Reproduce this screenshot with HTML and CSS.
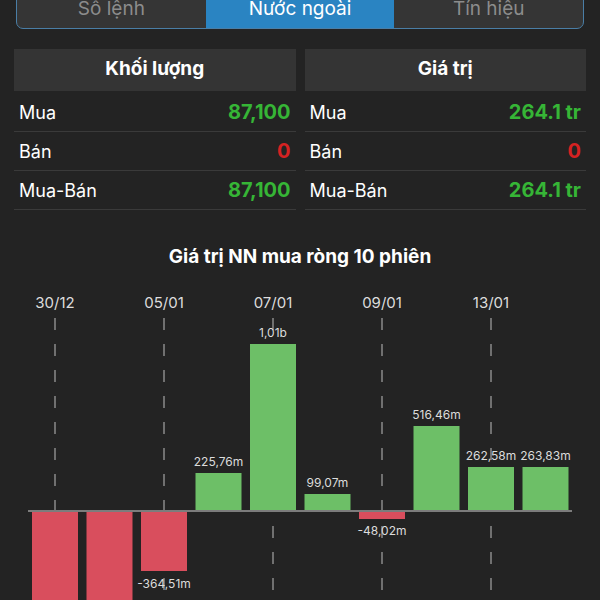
FILE: index.html
```html
<!DOCTYPE html>
<html lang="vi">
<head>
  <meta charset="UTF-8">
  <meta name="viewport" content="width=device-width, initial-scale=1.0">
  <title>Nước ngoài</title>
  <link rel="stylesheet" href="styles.css">
</head>
<body>

  <div class="page">
    <!-- tabs -->
    <div class="segment">
      <div class="seg-item">Sổ lệnh</div>
      <div class="seg-item active">Nước ngoài</div>
      <div class="seg-item">Tín hiệu</div>
    </div>

    <div class="summary">
      <div class="col">
        <div class="col-head">Khối lượng</div>
        <div class="row"><span>Mua</span><span class="up">87,100</span></div>
        <div class="row"><span>Bán</span><span class="down">0</span></div>
        <div class="row"><span>Mua-Bán</span><span class="up">87,100</span></div>
      </div>
      <div class="col">
        <div class="col-head">Giá trị</div>
        <div class="row"><span>Mua</span><span class="up">264.1 tr</span></div>
        <div class="row"><span>Bán</span><span class="down">0</span></div>
        <div class="row"><span>Mua-Bán</span><span class="up">264.1 tr</span></div>
      </div>
    </div>
  </div>

  <h2 class="chart-title">Giá trị NN mua ròng 10 phiên</h2>

  <svg class="chart" width="600" height="332" viewBox="0 268 600 332">
    <!-- dates -->
    <g class="dates">
      <text x="55" y="308">30/12</text>
      <text x="164" y="308">05/01</text>
      <text x="273" y="308">07/01</text>
      <text x="382" y="308">09/01</text>
      <text x="491" y="308">13/01</text>
    </g>
    <g class="grid">
      <line x1="55" y1="318" x2="55" y2="600" />
      <line x1="164" y1="318" x2="164" y2="600" />
      <line x1="273" y1="318" x2="273" y2="600" />
      <line x1="382" y1="318" x2="382" y2="600" />
      <line x1="491" y1="318" x2="491" y2="600" />
    </g>
    <line class="axis" x1="28" y1="511" x2="572" y2="511" />

    <!-- bars -->
    <rect class="neg" x="32" y="512" width="46" height="100" />
    <rect class="neg" x="86.5" y="512" width="46" height="100" />
    <rect class="neg" x="141" y="512" width="46" height="59" />
    <rect class="pos" x="195.5" y="473" width="46" height="37" />
    <rect class="pos" x="250" y="344" width="46" height="166" />
    <rect class="pos" x="304.5" y="494" width="46" height="16" />
    <rect class="neg" x="359" y="512" width="46" height="7" />
    <rect class="pos" x="413.5" y="426" width="46" height="84" />
    <rect class="pos" x="468" y="467" width="46" height="43" />
    <rect class="pos" x="522.5" y="467" width="46" height="43" />

    <g class="labels">
      <text x="164" y="588">-364,51m</text>
      <text x="218.5" y="466">225,76m</text>
      <text x="273" y="337">1,01b</text>
      <text x="327.5" y="487">99,07m</text>
      <text x="382" y="535">-48,02m</text>
      <text x="436.5" y="419">516,46m</text>
      <text x="491" y="460">262,58m</text>
      <text x="545.5" y="460">263,83m</text>
    </g>
  </svg>

</body>
</html>
```

FILE: styles.css
```css
body {
  font-family: Inter, "Noto Sans", sans-serif;
  background: #232323;
  color: white;
  margin: 0;
  padding: 0;
  overflow: hidden;
}

.page {
  padding: 0 14px;
}

.segment {
  display: flex;
  margin: -9px 2px 0;
  height: 36px;
  border: 1.5px solid #4a7ea6;
  border-radius: 7px;
  overflow: hidden;
  background: #353535;
}

.seg-item {
  flex: 1;
  text-align: center;
  font-size: 19px;
  line-height: 34px;
  color: #8c8c8c;
}

.seg-item.active {
  background: #2a84c2;
  color: white;
}

.summary {
  display: grid;
  grid-template-columns: 1fr 1fr;
  gap: 9px;
  margin-top: 20px;
}

.col-head {
  background: #343434;
  height: 42px;
  line-height: 40px;
  text-align: center;
  font-size: 19px;
  font-weight: bold;
  margin-bottom: 2px;
}

.row {
  display: flex;
  justify-content: space-between;
  align-items: center;
  height: 38px;
  padding: 0 5px;
  border-bottom: 1px solid #3a3a3a;
  font-size: 18px;
}

.up {
  color: #36b536;
  font-weight: bold;
  font-size: 20px;
}

.down {
  color: #d42222;
  font-weight: bold;
  font-size: 20px;
}

.chart-title {
  margin: 36px 0 0;
  text-align: center;
  font-size: 19px;
  line-height: 22px;
  font-weight: bold;
}

.chart {
  display: block;
}

.dates text {
  font-size: 15px;
  fill: #dddddd;
  text-anchor: middle;
}

.grid line {
  stroke: #8a8a8a;
  stroke-width: 1.5;
  stroke-dasharray: 12 14;
}

.axis {
  stroke: #7c7c7c;
  stroke-width: 2;
}

.pos {
  fill: #6dbf67;
}

.neg {
  fill: #d94e5d;
}

.labels text {
  font-size: 12px;
  fill: #dcdcdc;
  text-anchor: middle;
}
```
